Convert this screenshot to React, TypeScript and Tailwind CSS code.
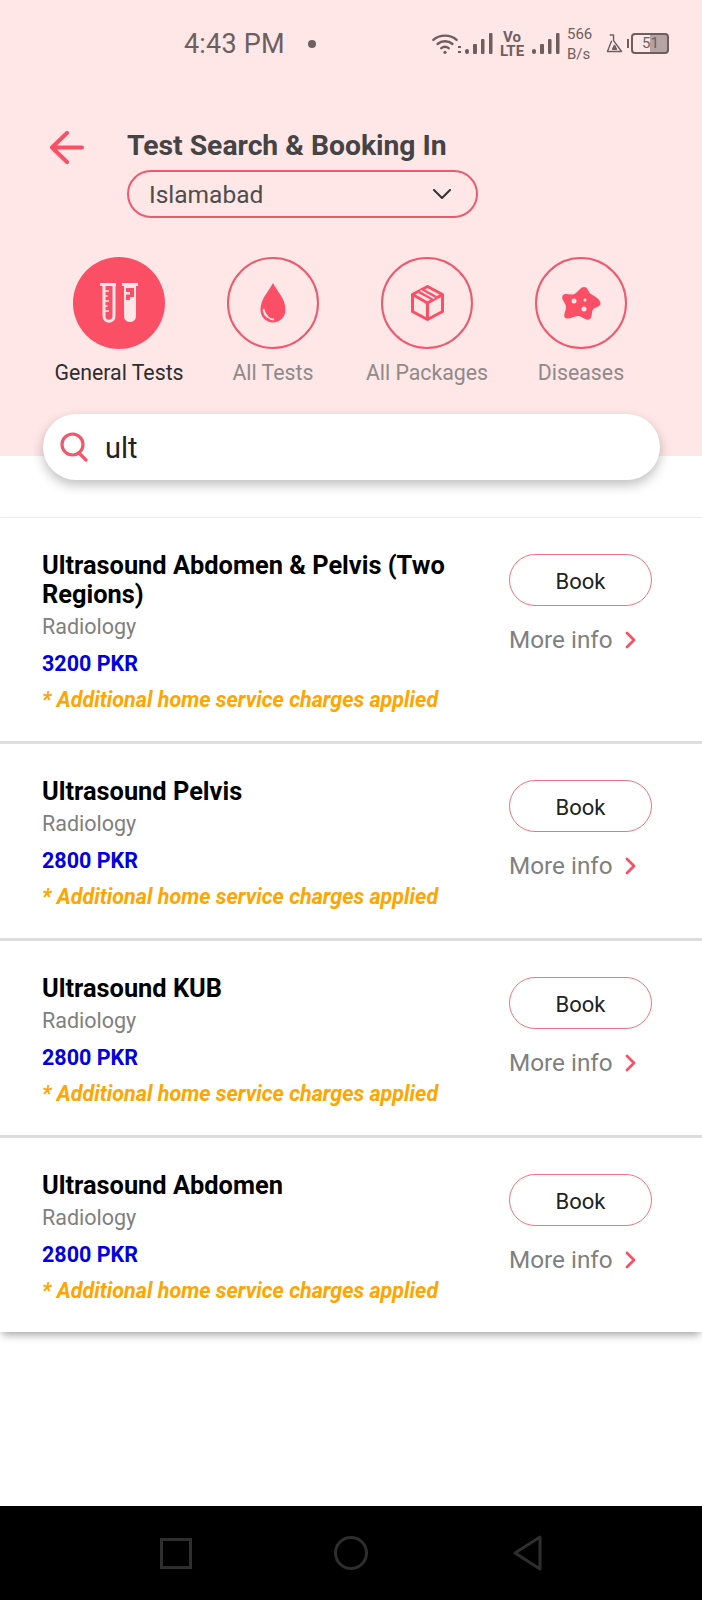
import React from 'react';

const tests = [
  { name: 'Ultrasound Abdomen & Pelvis (Two Regions)', price: '3200 PKR' },
  { name: 'Ultrasound Pelvis', price: '2800 PKR' },
  { name: 'Ultrasound KUB', price: '2800 PKR' },
  { name: 'Ultrasound Abdomen', price: '2800 PKR' },
];

const Bars = () => (
  <svg width="28" height="22" viewBox="0 0 28 22" fill="#6e5f5f">
    <rect x="0" y="16" width="4" height="5" rx="2" />
    <rect x="8" y="11" width="4" height="10" rx="1" />
    <rect x="16" y="6" width="3.5" height="15" rx="1" />
    <rect x="24" y="0" width="3.5" height="21" rx="1" />
  </svg>
);

const StatusBar = () => (
  <div className="flex items-center h-[44px] mt-[21px] pl-[184px] text-[#6e5f5f]">
    <span className="text-[27px] leading-[44px] w-[124px] mt-[2px] tracking-[0.2px]">4:43 PM</span>
    <span className="w-[8px] h-[8px] rounded-full bg-[#6e5f5f] mt-[2px]"></span>
    <div className="flex items-center ml-[116px] mt-[1px]">
      <svg width="26" height="24" viewBox="0 0 28 24" fill="none" stroke="#6e5f5f" strokeWidth="2.6" strokeLinecap="round">
        <path d="M1.5 7.5C8 1.5 20 1.5 26.5 7.5" />
        <path d="M6 12C10.500 8 17.500 8 22 12" />
        <path d="M10 16.500C12.500 14.500 15.500 14.500 18 16.500" />
        <circle cx="14" cy="21" r="1.700" fill="#6e5f5f" stroke="none" />
      </svg>
      <div className="flex flex-col gap-[3px] mt-[12px]">
        <span className="w-[3px] h-[2px] bg-[#6e5f5f]"></span>
        <span className="w-[3px] h-[2px] bg-[#6e5f5f]"></span>
      </div>
      <div className="ml-[4px]"><Bars /></div>
      <div className="w-[24px] ml-[7px] flex justify-center text-center font-bold text-[15px] leading-[14px]">
        Vo LTE
      </div>
      <div className="ml-[8px]"><Bars /></div>
      <div className="w-[25px] ml-[7px] text-[15px] leading-[20px]">566 B/s</div>
      <svg className="ml-[14px]" width="17" height="19" viewBox="0 0 18 20" fill="none" stroke="#6e5f5f" strokeWidth="1.500" strokeLinejoin="round">
        <path d="M4 1H8V7L16.500 18.500H1.500L6 7" />
        <path d="M9 12L7 16H11Z" fill="#6e5f5f" />
      </svg>
      <span className="w-[2px] h-[9px] bg-[#6e5f5f] ml-[4px]"></span>
      <div className="relative flex items-center w-[38px] h-[21px] ml-[2px] pl-[9px] rounded-[4px] border-2 border-[#6e5f5f] text-[15px]">
        51
        <span className="absolute left-[17px] top-0 bottom-0 right-0 bg-[#6e5f5f] opacity-50"></span>
      </div>
    </div>
  </div>
);

const TubesIcon = () => (
  <svg width="38" height="40" viewBox="0 0 38 40" fill="none">
    <path d="M0 1.500H16M14 1.500V33C14 40 4 40 4 33V1.500" stroke="#ffe6e7" strokeWidth="3" />
    <path d="M5 8H9M5 13H7.500M5 18H9M5 23H7.500M5 28H9" stroke="#ffe6e7" strokeWidth="1.500" />
    <path d="M22 0H38V3H36V33C36 41 24 41 24 33V3H22Z" fill="#ffe6e7" />
    <path d="M26 5H34V14H30V17H26Z" fill="#fb4f66" />
    <path d="M26 9H30V11.500H26Z" fill="#ffe6e7" />
  </svg>
);

const DropIcon = () => (
  <svg width="26" height="40" viewBox="0 0 26 40">
    <path d="M13 0C17 8 25.500 16 25.500 26.500C25.500 34 20 39.500 13 39.500C6 39.500 0.500 34 0.500 26.500C0.500 16 9 8 13 0Z" fill="#fb4f66" />
    <path d="M3.500 26C3.500 32 8 36 14 36.500C10 37 5 33 3.500 26Z" fill="#ffe6e7" stroke="#ffe6e7" strokeWidth="1.500" />
  </svg>
);

const BoxIcon = () => (
  <svg width="33" height="36" viewBox="0 0 33 36" fill="none" stroke="#fb4f66" strokeWidth="3" strokeLinejoin="round">
    <path d="M16.500 1.500L31.500 9.500V26.500L16.500 34.500L1.500 26.500V9.500Z" />
    <path d="M1.500 9.500L16.500 18L31.500 9.500M16.500 18V34.500" />
    <path d="M9 5.500L24 13.500" strokeWidth="6" />
    <path d="M9.500 5.500L23.500 13.500" stroke="#ffe6e7" strokeWidth="1.500" />
  </svg>
);

const GermIcon = () => (
  <svg width="39" height="33" viewBox="0 0 39 33">
    <path d="M22 0C26 0 26 5 29 7C32 9 38.500 12 38.500 16.500C38.500 20 33 20 31 22.500C29 25 31 31 27 32.500C23 33.500 20 29 16 29C12 29 7 33 3.500 31C0.500 29 4 24 4 20C4 16 -1 13 0.500 9C2 5.500 7 8 11 7.500C15 7 18 0 22 0Z" fill="#fb4f66" />
    <circle cx="12" cy="14" r="2.500" fill="#ffe6e7" />
    <circle cx="23" cy="13" r="1.500" fill="#ffe6e7" />
    <circle cx="22" cy="22" r="2.500" fill="#ffe6e7" />
  </svg>
);

const categories = [
  { label: 'General Tests', icon: <TubesIcon />, active: true },
  { label: 'All Tests', icon: <DropIcon />, active: false },
  { label: 'All Packages', icon: <BoxIcon />, active: false },
  { label: 'Diseases', icon: <GermIcon />, active: false },
];

const App: React.FC = () => {
  return (
    <div className="w-[702px] h-[1600px] flex flex-col bg-white overflow-hidden font-['Roboto',sans-serif]">
      {/* Cabecera */}
      <div className="h-[456px] shrink-0 bg-[#ffe6e7]">
        <StatusBar />
        <div className="flex mt-[63px] pl-[50px]">
          <svg className="mt-[3px]" width="34" height="33" viewBox="0 0 34 33" fill="none" stroke="#fb4f66" strokeWidth="4" strokeLinecap="round" strokeLinejoin="round">
            <path d="M32 16.500H3M17 2L2 16.500L17 31" />
          </svg>
          <div className="ml-[43px]">
            <h1 className="text-[28.3px] leading-[36px] font-bold text-[#444444]">Test Search &amp; Booking In</h1>
            <div className="flex items-center justify-between w-[351px] h-[48px] mt-[6px] pl-[20px] pr-[25px] rounded-full border-2 border-[#ec5a6e] text-[24.5px] text-[#4d4d4d]">
              <span className="pt-[3px]">Islamabad</span>
              <svg width="18" height="10" viewBox="0 0 18 10" fill="none" stroke="#333333" strokeWidth="2" strokeLinecap="round" strokeLinejoin="round">
                <path d="M1 1L9 9L17 1" />
              </svg>
            </div>
          </div>
        </div>
        <div className="flex mt-[39px] pl-[42px]">
          {categories.map((c) => (
            <div key={c.label} className="flex flex-col items-center w-[154px]">
              <div className={c.active
                ? 'flex items-center justify-center w-[92px] h-[92px] rounded-full bg-[#fb4f66]'
                : 'flex items-center justify-center w-[92px] h-[92px] rounded-full border-2 border-[#ec5a6e]'}>
                {c.icon}
              </div>
              <span className={c.active
                ? 'mt-[10px] text-[21.3px] leading-[28px] whitespace-nowrap text-[#2e2e2e]'
                : 'mt-[10px] text-[21.3px] leading-[28px] whitespace-nowrap text-[#8e8a8a]'}>
                {c.label}
              </span>
            </div>
          ))}
        </div>
      </div>

      {/* Buscador */}
      <div className="flex items-center w-[617px] h-[66px] -mt-[42px] ml-[43px] pl-[17px] rounded-full bg-white shadow-[0_5px_12px_rgba(0,0,0,0.25)] z-10">
        <svg width="28" height="30" viewBox="0 0 28 30" fill="none" stroke="#f4566c" strokeWidth="3.200" strokeLinecap="round">
          <circle cx="12.500" cy="12.500" r="10.500" />
          <path d="M19 21L26 28" />
        </svg>
        <span className="ml-[17px] pt-[3px] text-[29px] text-[#222222]">ult</span>
      </div>

      {/* Resultados */}
      <div className="mt-[37px] border-t border-[#eeeeee] shadow-[0_5px_8px_-2px_rgba(0,0,0,0.35)]">
        {tests.map((t, i) => (
          <div key={t.name} className={i < 3
            ? 'flex justify-between pl-[42px] pr-[50px] pt-[33px] pb-[26px] bg-white border-b-[3px] border-[#dddddd]'
            : 'flex justify-between pl-[42px] pr-[50px] pt-[33px] pb-[26px] bg-white'}>
            <div className="w-[420px]">
              <div className="text-[25.4px] leading-[29px] font-bold text-black">{t.name}</div>
              <div className="mt-[3px] text-[21.5px] leading-[30px] text-[#808080]">Radiology</div>
              <div className="mt-[7px] text-[21.5px] leading-[30px] font-bold text-[#0000e0]">{t.price}</div>
              <div className="mt-[6px] text-[21.5px] leading-[30px] font-bold italic text-[#ffa500] whitespace-nowrap">* Additional home service charges applied</div>
            </div>
            <div className="w-[143px]">
              <div className="flex items-center justify-center h-[52px] pt-[3px] mt-[3px] rounded-full border border-[#ee7383] text-[22px] text-[#222222]">Book</div>
              <div className="flex items-center mt-[19px] text-[24.3px] leading-[30px] text-[#808080]">
                More info
                <svg className="ml-[12px]" width="11" height="18" viewBox="0 0 11 18" fill="none" stroke="#fb4f66" strokeWidth="2.800" strokeLinecap="round" strokeLinejoin="round">
                  <path d="M2 2L9 9L2 16" />
                </svg>
              </div>
            </div>
          </div>
        ))}
      </div>

      {/* Barra de navegacion */}
      <div className="mt-auto flex items-center h-[94px] bg-black pl-[160px]">
        <span className="w-[32px] h-[31px] border-[3px] border-[#2e2e2e]"></span>
        <span className="w-[34px] h-[34px] ml-[142px] rounded-[50%] border-[3px] border-[#2e2e2e]"></span>
        <svg className="ml-[145px]" width="29" height="36" viewBox="0 0 29 36" fill="none" stroke="#2e2e2e" strokeWidth="3" strokeLinejoin="round">
          <path d="M27 2V34L2 18Z" />
        </svg>
      </div>
    </div>
  );
};

export default App;
